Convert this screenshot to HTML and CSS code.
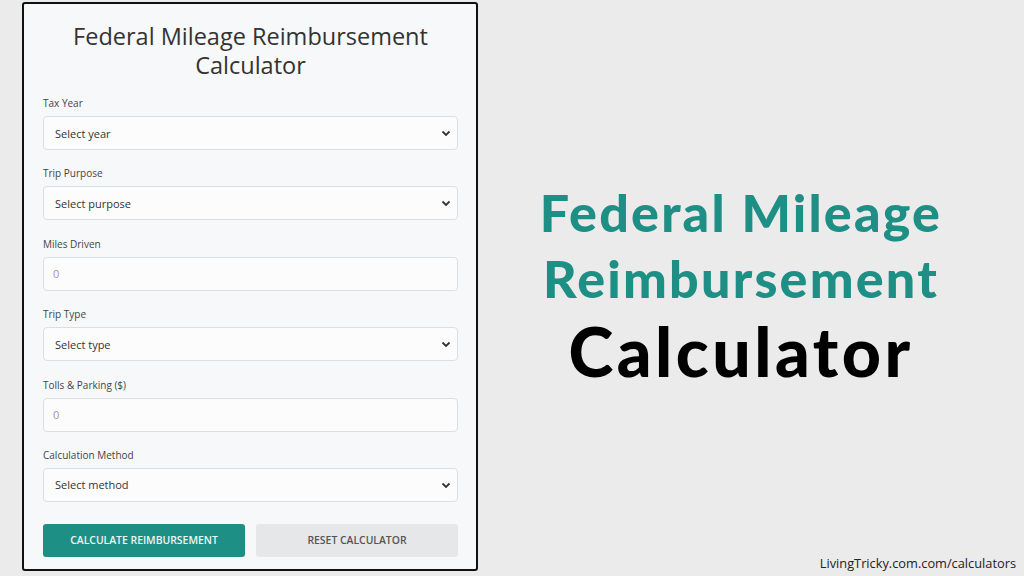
FILE: index.html
```html
<!DOCTYPE html>
<html lang="en">
<head>
<meta charset="utf-8">
<title>Federal Mileage Reimbursement Calculator</title>
<link rel="stylesheet" href="styles.css">
</head>
<body>
<div class="page">
  <div class="card">
    <h1 class="card-title">Federal Mileage Reimbursement Calculator</h1>
    <div class="field">
      <label class="field-label">Tax Year</label>
      <select class="control select"><option>Select year</option></select>
    </div>
    <div class="field">
      <label class="field-label">Trip Purpose</label>
      <select class="control select"><option>Select purpose</option></select>
    </div>
    <div class="field">
      <label class="field-label">Miles Driven</label>
      <input class="control input" type="text" placeholder="0">
    </div>
    <div class="field">
      <label class="field-label">Trip Type</label>
      <select class="control select"><option>Select type</option></select>
    </div>
    <div class="field">
      <label class="field-label">Tolls &amp; Parking ($)</label>
      <input class="control input" type="text" placeholder="0">
    </div>
    <div class="field">
      <label class="field-label">Calculation Method</label>
      <select class="control select"><option>Select method</option></select>
    </div>
    <div class="actions">
      <button class="btn btn-primary">CALCULATE REIMBURSEMENT</button>
      <button class="btn btn-secondary">RESET CALCULATOR</button>
    </div>
  </div>
  <div class="hero">
    <div class="hero-teal">Federal Mileage<br>Reimbursement</div>
    <div class="hero-black">Calculator</div>
  </div>
</div>
<div class="footer">LivingTricky.com.com/calculators</div>
</body>
</html>
```
FILE: styles.css
```css
* { box-sizing: border-box; }
html, body { margin: 0; padding: 0; }
body {
  width: 1024px;
  height: 576px;
  background: #ebebeb;
  font-family: "Open Sans", "Noto Sans", sans-serif;
  position: relative;
  overflow: hidden;
}
.page {
  display: flex;
  align-items: flex-start;
  padding: 2px 0 0 22px;
}
.card {
  width: 456px;
  height: 569px;
  background: #f7f8f9;
  border: 2px solid #111;
  border-radius: 3px;
  padding: 18px 18px 0 19px;
  display: flex;
  flex-direction: column;
}
.card-title {
  margin: 0 0 16px;
  font-size: 23.5px;
  line-height: 29px;
  font-weight: 500;
  color: #333;
  text-align: center;
}
.field {
  display: flex;
  flex-direction: column;
  gap: 6px;
  margin-bottom: 16.4px;
}
.field-label {
  font-size: 10px;
  line-height: 14px;
  color: #444;
}
.control {
  width: 100%;
  height: 34px;
  border: 1px solid #dcdfe2;
  border-radius: 4px;
  background-color: #fcfcfc;
  font-family: "Open Sans", "Noto Sans", sans-serif;
  font-size: 11px;
  color: #333;
  padding: 0 11px;
  outline: none;
}
.select {
  appearance: none;
  -webkit-appearance: none;
  background-image: url("data:image/svg+xml,%3Csvg xmlns='http://www.w3.org/2000/svg' width='10' height='8' viewBox='0 0 10 8'%3E%3Cpath d='M1.5 2.5 L5 6 L8.5 2.5' fill='none' stroke='%23333' stroke-width='1.8'/%3E%3C/svg%3E");
  background-repeat: no-repeat;
  background-position: right 6px center;
}
.input { padding: 0 9px; }
.input::placeholder { color: #9a9a9a; }
.actions {
  display: flex;
  gap: 11px;
  margin-top: 5.6px;
}
.btn {
  width: 202px;
  height: 33px;
  border: none;
  border-radius: 3px;
  font-family: "Open Sans", "Noto Sans", sans-serif;
  font-size: 10.4px;
  font-weight: 600;
  letter-spacing: 0;
}
.btn-primary { background: #1e8f85; color: #f2f6f5; }
.btn-secondary { background: #e6e7e8; color: #555; }
.hero {
  flex: 1;
  padding: 177px 20px 0 0;
  text-align: center;
  font-family: "Lato", "Noto Sans", sans-serif;
  font-weight: 900;
}
.hero-teal {
  color: #1e8f85;
  font-size: 52px;
  line-height: 66px;
  letter-spacing: 2.2px;
}
.hero-black {
  color: #000;
  font-size: 68px;
  line-height: 80px;
  letter-spacing: 3.5px;
}
.footer {
  position: absolute;
  right: 8px;
  bottom: 4px;
  font-size: 12.8px;
  color: #222;
  font-family: "Open Sans", "Noto Sans", sans-serif;
}
```
